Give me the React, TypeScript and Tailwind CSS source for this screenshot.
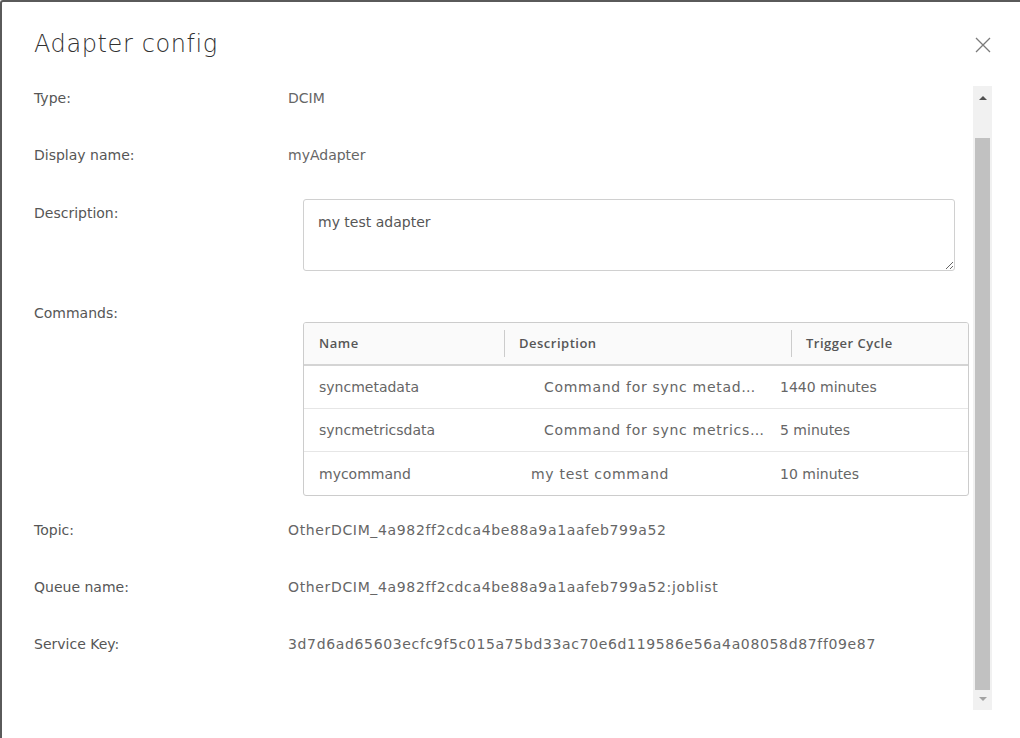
import { useState } from 'react';

const fields = [
    { label: 'Topic:', value: 'OtherDCIM_4a982ff2cdca4be88a9a1aafeb799a52' },
    { label: 'Queue name:', value: 'OtherDCIM_4a982ff2cdca4be88a9a1aafeb799a52:joblist' },
    { label: 'Service Key:', value: '3d7d6ad65603ecfc9f5c015a75bd33ac70e6d119586e56a4a08058d87ff09e87' },
];

const commands = [
    { name: 'syncmetadata', description: 'Command for sync metad…', full: 'Command for sync metadata', cycle: '1440 minutes', pad: 'pl-[40px]' },
    { name: 'syncmetricsdata', description: 'Command for sync metrics…', full: 'Command for sync metricsdata', cycle: '5 minutes', pad: 'pl-[40px]' },
    { name: 'mycommand', description: 'my test command', full: 'my test command', cycle: '10 minutes', pad: 'pl-[27px]' },
];

function Label({ children }: { children: string }) {
    return <div className="w-[254px] shrink-0 text-sm leading-6 text-[#565656]">{children}</div>;
}

function CommandsTable() {
    return (
        <div className="ml-[15px] mt-[21px] w-[666px] overflow-hidden rounded-[3px] border border-[#cccccc]">
            <div className="grid h-[43px] grid-cols-[200px_287px_1fr] items-center border-b-2 border-[#d4d4d4] bg-[#fafafa] font-['Open_Sans',sans-serif] text-[13px] font-semibold tracking-[0.5px] text-[#565656]">
                <div className="pl-[15px]">Name</div>
                <div className="flex h-[27px] items-center border-l border-[#cccccc] pl-[14px]">Description</div>
                <div className="flex h-[27px] items-center border-l border-[#cccccc] pl-[14px]">Trigger Cycle</div>
            </div>
            {commands.map((row, i) => (
                <div
                    key={row.name}
                    className={`grid h-[43px] grid-cols-[200px_276px_1fr] items-center text-sm text-[#666666] ${i < commands.length - 1 ? 'border-b border-[#e6e6e6]' : ''}`}
                >
                    <div className="pl-[15px]">{row.name}</div>
                    <div className={`${row.pad} whitespace-nowrap tracking-[0.7px]`} title={row.full}>
                        {row.description}
                    </div>
                    <div>{row.cycle}</div>
                </div>
            ))}
        </div>
    );
}

export default function App() {
    const [description, setDescription] = useState('my test adapter');

    return (
        <div className="h-[738px] w-[1020px] overflow-hidden bg-white font-['DejaVu_Sans',sans-serif]">
            <div className="flex h-full flex-col rounded-tl-[3px] border-l-2 border-t-2 border-[#5a5a5a] bg-white">
                <header className="flex h-[84px] items-start justify-between pl-[32px] pr-[28px] pt-[26px]">
                    <h1 className="text-[24px] font-extralight leading-8 tracking-[0.6px] text-[#313131]">Adapter config</h1>
                    <button type="button" className="mr-px mt-[9px] text-[#7a7a7a]" aria-label="Close">
                        <svg width="16" height="16" viewBox="0 0 16 16" fill="none" stroke="currentColor" strokeWidth="1.3">
                            <path d="M1 1 L15 15 M15 1 L1 15" />
                        </svg>
                    </button>
                </header>

                <div className="flex h-[624px]">
                    <div className="flex-1 pl-[32px]">
                        <div className="flex">
                            <Label>Type:</Label>
                            <div className="text-sm leading-6 text-[#666666]">DCIM</div>
                        </div>
                        <div className="mt-[33px] flex">
                            <Label>Display name:</Label>
                            <div className="text-sm leading-6 text-[#666666]">myAdapter</div>
                        </div>
                        <div className="mt-[32px] flex">
                            <div className="pt-[2px]">
                                <Label>Description:</Label>
                            </div>
                            <textarea
                                value={description}
                                onChange={(e) => setDescription(e.target.value)}
                                className="ml-[15px] h-[72px] w-[652px] rounded-[3px] border border-[#d0d0d0] px-[14px] py-[10px] text-sm leading-6 text-[#565656] outline-none"
                            />
                        </div>
                        <div className="mt-[30px] flex">
                            <Label>Commands:</Label>
                            <CommandsTable />
                        </div>
                        {fields.map((field, i) => (
                            <div key={field.label} className={`flex ${i === 0 ? 'mt-[22px]' : 'mt-[33px]'}`}>
                                <Label>{field.label}</Label>
                                <div className="whitespace-nowrap text-sm leading-6 tracking-[0.65px] text-[#666666]">{field.value}</div>
                            </div>
                        ))}
                    </div>

                    {/* scrollbar as drawn in the dialog */}
                    <div className="mr-[28px] flex w-[19px] flex-col items-center bg-[#f1f1f1]">
                        <div className="flex h-[17px] w-full items-end justify-center pb-[3px]">
                            <div className="h-0 w-0 border-x-[4px] border-b-[4px] border-x-transparent border-b-[#505050]" />
                        </div>
                        <div className="mt-[35px] h-[552px] w-[15px] bg-[#c1c1c1]" />
                        <div className="flex h-[17px] w-full items-center justify-center">
                            <div className="h-0 w-0 border-x-[4px] border-t-[4px] border-x-transparent border-t-[#a3a3a3]" />
                        </div>
                    </div>
                </div>
            </div>
        </div>
    );
}
